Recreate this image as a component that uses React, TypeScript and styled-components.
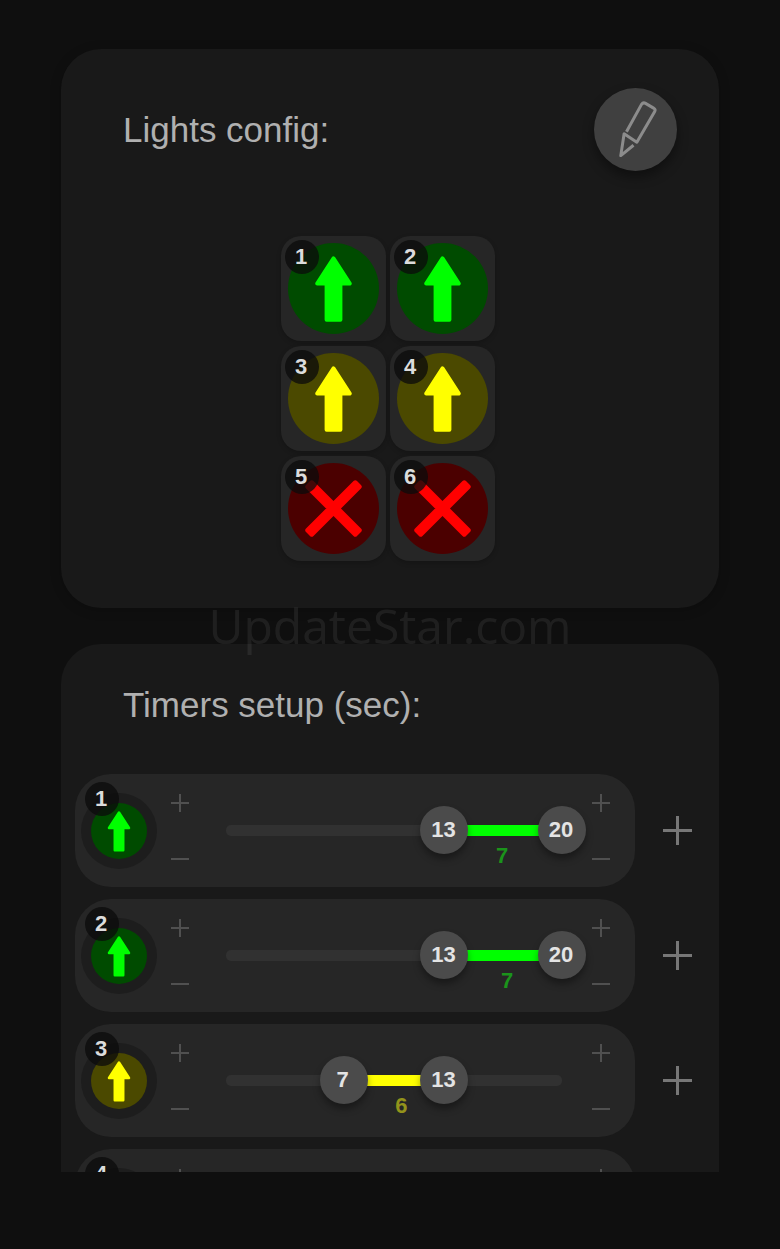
import React, { useState } from "react";
import styled, { createGlobalStyle } from "styled-components";

type Tone = "green" | "yellow" | "red";

const tones: Record<Tone, { lit: string; glow: string; label: string }> = {
  green: { lit: "#00ff00", glow: "#004b00", label: "#1b941b" },
  yellow: { lit: "#ffff00", glow: "#4b4900", label: "#93931b" },
  red: { lit: "#ff0000", glow: "#4b0000", label: "#941b1b" },
};

const MAX_SECONDS = 20;

const lights: { id: number; tone: Tone }[] = [
  { id: 1, tone: "green" },
  { id: 2, tone: "green" },
  { id: 3, tone: "yellow" },
  { id: 4, tone: "yellow" },
  { id: 5, tone: "red" },
  { id: 6, tone: "red" },
];

/* labelAt is the place of the duration label on the slider's own scale */
const timers: { id: number; tone: Tone; from: number; to: number; labelAt: number }[] = [
  { id: 1, tone: "green", from: 13, to: 20, labelAt: 16.5 },
  { id: 2, tone: "green", from: 13, to: 20, labelAt: 16.8 },
  { id: 3, tone: "yellow", from: 7, to: 13, labelAt: 10.5 },
  { id: 4, tone: "yellow", from: 7, to: 13, labelAt: 10.5 },
];

const GlobalStyle = createGlobalStyle`
  * { box-sizing: border-box; }
  body {
    margin: 0;
    background: #0f0f0f;
    font-family: "Liberation Sans", Arial, sans-serif;
  }
  button {
    display: grid;
    place-items: center;
    padding: 0;
    border: 0;
    background: none;
    cursor: pointer;
  }
`;

const Page = styled.main`
  display: flex;
  flex-direction: column;
  height: 100vh;
  padding: 49px 61px 77px;
`;

const Panel = styled.section`
  flex: none;
  padding: 39px 0 47px;
  border-radius: 40px;
  background: #191919;
  box-shadow: 0 2px 12px rgba(0, 0, 0, 0.2);
`;

const ScrollPanel = styled(Panel)`
  flex: 1;
  min-height: 0;
  padding: 41px 0 0;
  border-radius: 40px 40px 0 0;
  overflow-y: auto;
  scrollbar-width: none;
  box-shadow: none;
`;

const PanelHeader = styled.header`
  display: flex;
  align-items: center;
  justify-content: space-between;
  padding: 0 42px 0 62px;
`;

const Title = styled.h2`
  margin: 0;
  color: #b0b0b0;
  font-size: 35px;
  font-weight: 400;
  line-height: 40px;
`;

const EditButton = styled.button`
  width: 83px;
  height: 83px;
  border-radius: 50%;
  background: #404040;
  box-shadow: 0 6px 12px rgba(0, 0, 0, 0.4);
`;

const Watermark = styled.div`
  position: relative;
  z-index: 1;
  display: flex;
  flex: none;
  align-items: center;
  justify-content: center;
  height: 36px;
  color: rgba(255, 255, 255, 0.07);
  font: 48px/48px "Open Sans", "Noto Sans", sans-serif;
  white-space: nowrap;
  pointer-events: none;
`;

const LightGrid = styled.div`
  display: grid;
  grid-template-columns: 105px 105px;
  justify-content: center;
  gap: 5px 4px;
  margin-top: 65px;
  padding-right: 4px;
`;

const LightTile = styled.div`
  position: relative;
  display: grid;
  place-items: center;
  height: 105px;
  border-radius: 20px;
  background: #262626;
  box-shadow: 0 2px 5px rgba(0, 0, 0, 0.2);
`;

const Lamp = styled.div<{ $tone: Tone; $size: number }>`
  display: grid;
  width: ${(p) => p.$size}px;
  height: ${(p) => p.$size}px;
  border-radius: 50%;
  color: ${(p) => tones[p.$tone].lit};
  background: ${(p) => tones[p.$tone].glow};
`;

const Badge = styled.span<{ $top: number }>`
  position: absolute;
  top: ${(p) => p.$top}px;
  left: 4px;
  width: 34px;
  height: 34px;
  padding-right: 2px;
  border-radius: 50%;
  background: rgba(10, 10, 10, 0.76);
  color: #dcdcdc;
  font-size: 22px;
  font-weight: 700;
  line-height: 34px;
  text-align: center;
`;

const TimerList = styled.ul`
  display: grid;
  gap: 12px;
  margin: 49px 0 0;
  padding: 0 0 0 14px;
  list-style: none;
`;

const TimerRow = styled.li`
  display: grid;
  grid-template-columns: 1fr 84px;
`;

const TimerCard = styled.div`
  display: flex;
  align-items: center;
  height: 113px;
  padding: 0 19px 0 6px;
  border-radius: 36px;
  background: #262626;
`;

const LampRing = styled.div`
  position: relative;
  display: grid;
  flex: none;
  place-items: center;
  width: 76px;
  height: 76px;
  margin-right: 8px;
  border-radius: 50%;
  background: #1d1d1d;
`;

const Stepper = styled.div`
  display: grid;
  flex: none;
  grid-template-rows: 56px 56px;
  width: 30px;
`;

const StepButton = styled.button`
  color: #505050;
`;

const AddButton = styled.button`
  color: #777777;
`;

const Range = styled.div`
  position: relative;
  flex: 1;
  height: 113px;
  margin-left: 7px;
`;

const Scale = styled.div`
  position: absolute;
  inset: 0 24px;
`;

const LabelLayer = styled(Scale)`
  pointer-events: none;
`;

const Track = styled.div`
  position: absolute;
  inset: 51px 0 auto;
  height: 11px;
  border-radius: 5px;
  background: #313131;
`;

const Span = styled.div<{ $tone: Tone }>`
  position: absolute;
  top: 51px;
  height: 11px;
  background: ${(p) => tones[p.$tone].lit};
`;

const Handle = styled.input`
  position: absolute;
  inset: 32px 0 auto;
  width: 100%;
  height: 48px;
  margin: 0;
  appearance: none;
  background: none;
  pointer-events: none;

  &::-webkit-slider-runnable-track {
    height: 48px;
    background: none;
  }
  &::-webkit-slider-thumb {
    appearance: none;
    width: 48px;
    height: 48px;
    border-radius: 50%;
    background: #4b4b4b;
    box-shadow: 0 5px 7px rgba(0, 0, 0, 0.35);
    cursor: pointer;
    pointer-events: auto;
  }
`;

const Value = styled.output`
  position: absolute;
  top: 32px;
  width: 48px;
  margin-left: -25px;
  color: #e4e4e4;
  font-size: 22px;
  font-weight: 700;
  line-height: 48px;
  text-align: center;
`;

const Duration = styled(Value)<{ $tone: Tone }>`
  top: 70px;
  line-height: 24px;
  color: ${(p) => tones[p.$tone].label};
`;

function LampIcon({ tone }: { tone: Tone }) {
  return (
    <svg viewBox="0 0 92 92" aria-hidden="true">
      {tone === "red" ? (
        <path
          d="M24 20 46 42 68 20 72 24 50 46 72 68 68 72 46 50 24 72 20 68 42 46 20 24Z"
          fill="currentColor"
          stroke="currentColor"
          strokeWidth="5"
          strokeLinejoin="round"
        />
      ) : (
        <path
          d="M46 15.500 62.500 41H53V77.500H39V41H29.500Z"
          fill="currentColor"
          stroke="currentColor"
          strokeWidth="4"
          strokeLinejoin="round"
        />
      )}
    </svg>
  );
}

function PencilIcon() {
  return (
    <svg width="83" height="83" viewBox="43 56 248 248" fill="none" aria-hidden="true">
      <path
        d="M140 187 185 105Q190 98 197 102L221 116Q228 120 224 127L171 218 133 193 123 258 161 227"
        stroke="#8c8c8c"
        strokeWidth="9"
        strokeLinejoin="round"
      />
    </svg>
  );
}

function SignIcon({ size, weight, plus }: { size: number; weight: number; plus?: boolean }) {
  const mid = size / 2;
  return (
    <svg width={size} height={size} aria-hidden="true">
      <path
        d={`M0 ${mid}H${size}${plus ? `M${mid} 0V${size}` : ""}`}
        stroke="currentColor"
        strokeWidth={weight}
      />
    </svg>
  );
}

function StepControls({ name, onStep }: { name: string; onStep: (by: number) => void }) {
  return (
    <Stepper>
      <StepButton type="button" aria-label={`Increase ${name}`} onClick={() => onStep(1)}>
        <SignIcon size={18} weight={2} plus />
      </StepButton>
      <StepButton type="button" aria-label={`Decrease ${name}`} onClick={() => onStep(-1)}>
        <SignIcon size={18} weight={2} />
      </StepButton>
    </Stepper>
  );
}

const percent = (seconds: number) => `${(seconds / MAX_SECONDS) * 100}%`;

function Timer({ timer }: { timer: (typeof timers)[number] }) {
  const [from, setFrom] = useState(timer.from);
  const [to, setTo] = useState(timer.to);
  const changeFrom = (v: number) => setFrom(Math.max(0, Math.min(v, to)));
  const changeTo = (v: number) => setTo(Math.min(MAX_SECONDS, Math.max(v, from)));
  const moved = (from + to - timer.from - timer.to) / 2;

  return (
    <TimerRow>
      <TimerCard>
        <LampRing>
          <Lamp $tone={timer.tone} $size={56}>
            <LampIcon tone={timer.tone} />
          </Lamp>
          <Badge $top={-11}>{timer.id}</Badge>
        </LampRing>
        <StepControls name="start" onStep={(by) => changeFrom(from + by)} />
        <Range>
          <Scale>
            <Track />
            <Span $tone={timer.tone} style={{ left: percent(from), width: percent(to - from) }} />
          </Scale>
          <Handle
            type="range"
            aria-label={`Light ${timer.id} start`}
            max={MAX_SECONDS}
            value={from}
            onChange={(e) => changeFrom(Number(e.target.value))}
          />
          <Handle
            type="range"
            aria-label={`Light ${timer.id} end`}
            max={MAX_SECONDS}
            value={to}
            onChange={(e) => changeTo(Number(e.target.value))}
          />
          <LabelLayer>
            <Value style={{ left: percent(from) }}>{from}</Value>
            <Value style={{ left: percent(to) }}>{to}</Value>
            <Duration $tone={timer.tone} style={{ left: percent(timer.labelAt + moved) }}>
              {to - from}
            </Duration>
          </LabelLayer>
        </Range>
        <StepControls name="end" onStep={(by) => changeTo(to + by)} />
      </TimerCard>
      <AddButton type="button" aria-label={`Add interval to light ${timer.id}`}>
        <SignIcon size={29} weight={3} plus />
      </AddButton>
    </TimerRow>
  );
}

export default function App() {
  return (
    <>
      <GlobalStyle />
      <Page>
        <Panel>
          <PanelHeader>
            <Title>Lights config:</Title>
            <EditButton type="button" aria-label="Edit lights">
              <PencilIcon />
            </EditButton>
          </PanelHeader>
          <LightGrid>
            {lights.map((light) => (
              <LightTile key={light.id}>
                <Lamp $tone={light.tone} $size={91}>
                  <LampIcon tone={light.tone} />
                </Lamp>
                <Badge $top={4}>{light.id}</Badge>
              </LightTile>
            ))}
          </LightGrid>
        </Panel>
        <Watermark>UpdateStar.com</Watermark>
        <ScrollPanel>
          <PanelHeader>
            <Title>Timers setup (sec):</Title>
          </PanelHeader>
          <TimerList>
            {timers.map((timer) => (
              <Timer key={timer.id} timer={timer} />
            ))}
          </TimerList>
        </ScrollPanel>
      </Page>
    </>
  );
}
